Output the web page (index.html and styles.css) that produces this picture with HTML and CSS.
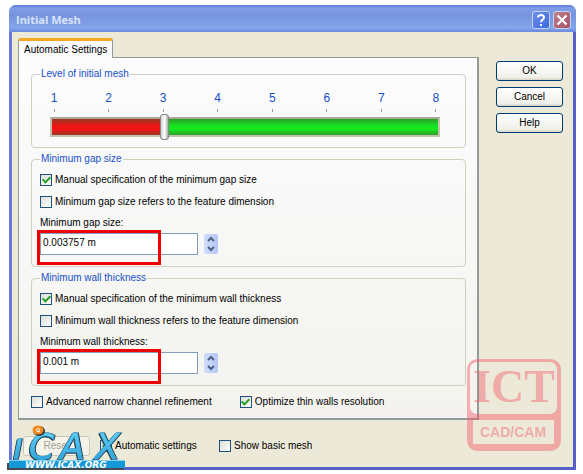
FILE: index.html
```html
<!DOCTYPE html>
<html lang="en">
<head>
    <meta charset="UTF-8">
    <meta name="viewport" content="width=device-width, initial-scale=1.0">
    <title>Initial Mesh</title>
    <link rel="stylesheet" href="styles.css">
</head>
<body>
    <div class="window">
        <header class="titlebar">
            <h1>Initial Mesh</h1>
            <button class="caption help" type="button" aria-label="Help">
                <svg width="18" height="18" viewBox="0 0 18 18"><path d="M6 6.5C6 3 12 3 12 6.5C12 8.7 9 8.6 9 11.2M9 13v2" fill="none" stroke="#fff" stroke-width="2"/></svg>
            </button>
            <button class="caption close" type="button" aria-label="Close">
                <svg width="18" height="18" viewBox="0 0 18 18"><path d="M4.500 4.500L13.500 13.500M13.500 4.500L4.500 13.500" fill="none" stroke="#fff" stroke-width="2.200"/></svg>
            </button>
        </header>

        <div class="content">
            <main class="settings">
                <button class="tab" type="button">Automatic Settings</button>
                <div class="panel">
                    <fieldset class="level">
                        <legend><label for="level">Level of initial mesh</label></legend>
                        <div class="scale">
                            <span>1</span><span>2</span><span>3</span><span>4</span><span>5</span><span>6</span><span>7</span><span>8</span>
                        </div>
                        <input class="slider" type="range" id="level" min="1" max="8" value="3">
                    </fieldset>

                    <fieldset>
                        <legend>Minimum gap size</legend>
                        <label class="check"><input type="checkbox" checked>Manual specification of the minimum gap size</label>
                        <label class="check"><input type="checkbox">Minimum gap size refers to the feature dimension</label>
                        <label class="caption-text" for="gap">Minimum gap size:</label>
                        <div class="field">
                            <input class="value" type="text" id="gap" value="0.003757 m">
                            <div class="spinner">
                                <button type="button" aria-label="Increase gap size"><svg width="8" height="6" viewBox="0 0 8 6"><path d="M1 5L4 2L7 5" /></svg></button>
                                <button type="button" aria-label="Decrease gap size"><svg width="8" height="6" viewBox="0 0 8 6"><path d="M1 1L4 4L7 1" /></svg></button>
                            </div>
                            <div class="highlight"></div>
                        </div>
                    </fieldset>

                    <fieldset>
                        <legend>Minimum wall thickness</legend>
                        <label class="check"><input type="checkbox" checked>Manual specification of the minimum wall thickness</label>
                        <label class="check"><input type="checkbox">Minimum wall thickness refers to the feature dimension</label>
                        <label class="caption-text" for="wall">Minimum wall thickness:</label>
                        <div class="field">
                            <input class="value" type="text" id="wall" value="0.001 m">
                            <div class="spinner">
                                <button type="button" aria-label="Increase wall thickness"><svg width="8" height="6" viewBox="0 0 8 6"><path d="M1 5L4 2L7 5" /></svg></button>
                                <button type="button" aria-label="Decrease wall thickness"><svg width="8" height="6" viewBox="0 0 8 6"><path d="M1 1L4 4L7 1" /></svg></button>
                            </div>
                            <div class="highlight"></div>
                        </div>
                    </fieldset>

                    <div class="options">
                        <label class="check"><input type="checkbox">Advanced narrow channel refinement</label>
                        <label class="check"><input type="checkbox" checked>Optimize thin walls resolution</label>
                    </div>
                </div>
            </main>

            <aside class="actions">
                <button class="btn" type="button">OK</button>
                <button class="btn" type="button">Cancel</button>
                <button class="btn" type="button">Help</button>
            </aside>
        </div>

        <footer class="bottom">
            <button class="btn" type="button" disabled>Reset</button>
            <label class="check auto"><input type="checkbox" checked>Automatic settings</label>
            <label class="check"><input type="checkbox">Show basic mesh</label>
        </footer>

        <svg class="icax" width="122" height="46" viewBox="0 0 122 46">
            <defs>
                <linearGradient id="blue" x1="0" y1="0" x2="0" y2="1">
                    <stop offset="0" stop-color="#7fdcfa"/>
                    <stop offset="1" stop-color="#1c94d6"/>
                </linearGradient>
            </defs>
            <g class="wordmark"><text x="6" y="34">ı</text><text x="22" y="34">C</text><text x="53" y="34">A</text><text x="88" y="34">X</text></g>
            <ellipse cx="32" cy="6" rx="6" ry="5" fill="#333"/>
            <ellipse cx="31" cy="5" rx="5.500" ry="4.500" fill="#f58a1f"/>
            <path d="M33 6.500C29 8 28 3 31.500 3.500C33.500 4 32 6.500 31 6" fill="none" stroke="#fff"/>
            <path d="M0 38h117v7H0z" fill="#45494e"/>
            <path d="M2 35h116v8H2z" fill="#1598d8"/>
            <path d="M2 35h116v1H2z" fill="#7fd2f4"/>
            <text class="site" x="18" y="43">WWW.ICAX.ORG</text>
        </svg>

        <svg class="ict" width="94" height="92" viewBox="0 0 94 92">
            <path fill-rule="evenodd" d="M12 0H82Q94 0 94 12V80Q94 92 82 92H12Q0 92 0 80V12Q0 0 12 0ZM11 3Q3 3 3 11V47Q3 55 11 55H82Q90 55 90 47V11Q90 3 82 3ZM6 61V85H87V61Z"/>
            <text class="ict-name" x="47" y="43">ICT</text>
            <text class="ict-sub" x="46" y="78">CAD/CAM</text>
        </svg>
    </div>
</body>
</html>
```
FILE: styles.css
```css
* {
    box-sizing: border-box;
}
body {
    margin: 0;
    padding: 5px 7px 6px 9px;
    background: #fff;
    color: #000;
    font: 10px/14px "Liberation Sans", Arial, sans-serif;
}
button, input {
    font: inherit;
    color: inherit;
    margin: 0;
    padding: 0;
}
.window {
    position: relative;
    background: #ece9d8;
    border: 3px solid #6a7bdc;
    border-top: 0;
    border-right-color: #5560c8;
    border-bottom-color: #5560c8;
    border-radius: 7px 7px 0 0;
}
.titlebar {
    display: flex;
    align-items: center;
    gap: 3px;
    height: 27px;
    margin: 0 -3px;
    padding: 2px 5px 0 7px;
    border-radius: 7px 7px 0 0;
    background: linear-gradient(#5a78d0, #7f9ee8 3px, #7893de 10px, #82a6ec 23px, #6b88dc);
}
.titlebar h1 {
    flex: 1;
    margin: 0;
    color: #d8e4f8;
    font: bold 11px/16px "Open Sans", sans-serif;
}
.caption {
    width: 18px;
    height: 18px;
    border: 1px solid #c3d2f6;
    border-radius: 3px;
    overflow: hidden;
}
.caption svg {
    display: block;
    margin: -1px;
}
.help {
    background: linear-gradient(135deg, #6a90ee, #3f68dc);
}
.close {
    background: linear-gradient(135deg, #c0808c, #a45464);
}
.content {
    display: flex;
    gap: 17px;
    padding: 6px 10px 0 6px;
}
.settings {
    flex: 1;
}
.tab {
    display: block;
    height: 20px;
    margin-bottom: -1px;
    padding: 0 5px;
    position: relative;
    background: #fcfcfe;
    border: 1px solid #919b9c;
    border-top: 3px solid #f5a623;
    border-bottom: 0;
    border-radius: 3px 3px 0 0;
}
.panel {
    padding: 9px 11px 8px 12px;
    border: 1px solid #919b9c;
    border-right-width: 2px;
    border-bottom-width: 2px;
    background: linear-gradient(#fcfcfe, #f4f3ee);
}
fieldset {
    display: flex;
    flex-direction: column;
    min-width: 0;
    margin: 0 0 4px;
    padding: 6px 8px 11px;
    border: 1px solid #d0d0bf;
    border-radius: 4px;
}
legend {
    padding: 0 1px;
    color: #1650c8;
}
.level {
    padding: 9px 8px 7px;
}
.scale {
    display: flex;
    justify-content: space-between;
    margin: 0 17px 0 10px;
    color: #1650c8;
    font-size: 12px;
    line-height: 16px;
}
.scale span {
    width: 8px;
    text-align: center;
}
.scale span::after {
    content: "";
    display: block;
    width: 1px;
    height: 3px;
    margin: 3px auto 0;
    background: #9a9a8c;
}
.slider {
    appearance: none;
    height: 26px;
    margin: 2px 17px 0 10px;
    background: none;
}
.slider::-webkit-slider-runnable-track {
    height: 20px;
    border: 2px solid #c4bfae;
    border-top-color: #aca899;
    background:
        linear-gradient(rgba(70, 90, 50, .5), transparent 45%, transparent 65%, rgba(70, 90, 50, .5)),
        linear-gradient(90deg, #f01414 29%, #14e61e 29%);
}
.slider::-webkit-slider-thumb {
    appearance: none;
    width: 9px;
    height: 26px;
    margin-top: -5px;
    border: 1px solid #85858a;
    border-radius: 3px;
    background: linear-gradient(90deg, #d0d0d2, #fff 50%, #aaaaae);
}
.check {
    display: flex;
    align-items: center;
    gap: 3px;
    height: 16px;
    white-space: nowrap;
}
.check + .check {
    margin-top: 6px;
}
.check input {
    appearance: none;
    flex: none;
    width: 12px;
    height: 12px;
    border: 1px solid #1c5180;
    background: linear-gradient(135deg, #dcdcd7, #fff);
}
.check input:checked::after {
    content: "";
    display: block;
    width: 3px;
    height: 6px;
    margin: 0 auto;
    border: solid #21a121;
    border-width: 0 2px 2px 0;
    transform: rotate(45deg);
}
.caption-text {
    margin-top: 6px;
}
.field {
    position: relative;
    display: flex;
    align-items: center;
    gap: 6px;
    margin-top: 3px;
}
.value {
    width: 158px;
    height: 22px;
    padding: 0 2px 3px;
    border: 1px solid #7f9db9;
    background: #fff;
}
.spinner {
    display: flex;
    flex-direction: column;
    width: 14px;
    height: 20px;
    border-radius: 2px;
    background: linear-gradient(90deg, #d0dcfb, #b4c8f6);
}
.spinner button {
    flex: 1;
    display: flex;
    align-items: center;
    justify-content: center;
    border: 0;
    background: none;
}
.spinner path {
    fill: none;
    stroke: #4d6185;
    stroke-width: 2;
}
.highlight {
    position: absolute;
    left: -3px;
    top: -3px;
    width: 124px;
    height: 35px;
    border: 3px solid #f00000;
    pointer-events: none;
}
.options {
    display: flex;
    padding-top: 4px;
}
.options .check {
    margin-top: 0;
}
.options .check:first-child {
    flex: 0 0 48%;
}
.actions {
    display: flex;
    flex-direction: column;
    gap: 6px;
    padding-top: 23px;
}
.btn {
    width: 67px;
    height: 20px;
    border: 1px solid #003c74;
    border-radius: 3px;
    background: linear-gradient(#fff, #f0f0ea 85%, #d8d2c4);
}
.btn:disabled {
    border-color: #c9c7ba;
    background: #f5f4ea;
    color: #a1a192;
}
.bottom {
    display: flex;
    align-items: center;
    gap: 10px;
    padding: 16px 11px 11px;
}
.bottom .check {
    margin-top: 0;
}
.auto {
    width: 109px;
}
.icax {
    position: absolute;
    left: -5px;
    bottom: -4px;
}
.wordmark {
    filter: drop-shadow(-1px 1px 0 #26404f) drop-shadow(1px 0 0 #26404f);
}
.wordmark text {
    font: italic 36px "DejaVu Sans", sans-serif;
    fill: url(#blue);
    stroke: #3db4e6;
    stroke-width: 1px;
}
.site {
    font: italic bold 9px "DejaVu Sans", sans-serif;
    fill: #fff;
}
.ict {
    position: absolute;
    right: 12px;
    bottom: 16px;
    fill: rgba(242, 92, 104, .45);
}
.ict text {
    text-anchor: middle;
}
.ict-name {
    font: bold 46px "Liberation Serif", serif;
}
.ict-sub {
    font: bold 14px "Liberation Sans", Arial, sans-serif;
}
```
